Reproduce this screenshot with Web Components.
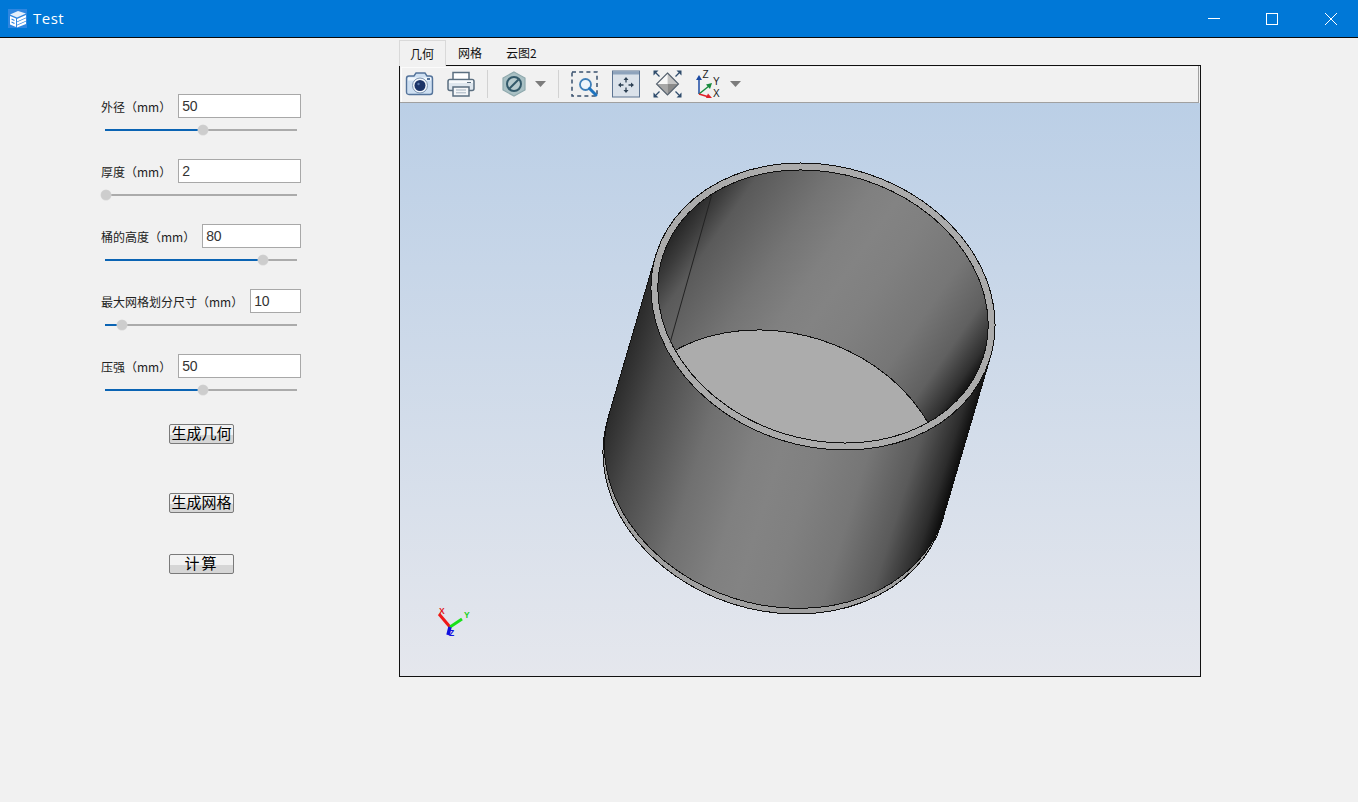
<!DOCTYPE html>
<html lang="zh">
<head>
<meta charset="utf-8">
<title>Test</title>
<style>
  html, body { margin: 0; height: 100%; background: #f1f1f1; overflow: hidden; }
  body { display: flex; flex-direction: column; }
</style>
</head>
<body>
<win-titlebar>Test</win-titlebar>
<app-main>
  <param-panel slot="side">
    <param-row label="外径（mm）" value="50" pos="98"></param-row>
    <param-row label="厚度（mm）" value="2" pos="1"></param-row>
    <param-row label="桶的高度（mm）" value="80" pos="158"></param-row>
    <param-row label="最大网格划分尺寸（mm）" value="10" pos="17"></param-row>
    <param-row label="压强（mm）" value="50" pos="98"></param-row>
    <app-button style="margin-top:22px">生成几何</app-button>
    <app-button style="margin-top:49px">生成网格</app-button>
    <app-button style="margin-top:41px" wide>计算</app-button>
  </param-panel>
  <view-tabs slot="view">
    <view-toolbar></view-toolbar>
    <model-view></model-view>
  </view-tabs>
</app-main>

<script>
class WinTitlebar extends HTMLElement {
  constructor() {
    super();
    this.attachShadow({ mode: "open" }).innerHTML = `
      <style>
        :host { display: flex; align-items: center; height: 37px; background: #0078d7; border-bottom: 1px solid #0a0a0a; color: #fff; flex: none; overflow: hidden; font: 15px "Open Sans", "Noto Sans", sans-serif; }
        .logo { margin-left: 8px; width: 19px; height: 19px; background: #2f86e0; display: block; }
        .name { margin-left: 6px; flex: 1; letter-spacing: .5px; padding-bottom: 1px; }
        .btns { display: flex; margin-right: -2px; }
        .btn { width: 58.5px; height: 37px; display: flex; align-items: center; justify-content: center; }
        .btn svg { display: block; width: 12px; height: 12px; }
      </style>
      <svg class="logo" viewBox="0 0 19 19">
        <path d="M2 5.500 L10 2 L18 4.500 L9 8.500 Z" fill="#e4effb"/>
        <path d="M2 7 L8 9.500 L8 18 L2 15.500 Z" fill="#fff"/>
        <path d="M3.500 10 L6.500 11.500 M3.500 13 L6.500 14.500" stroke="#2f86e0" stroke-width="1.200"/>
        <path d="M9 10 L18 6 V8.500 L9 12.500 Z M9 13.200 L18 9.200 V11.700 L9 15.700 Z M9 16.400 L18 12.400 V14.900 L9 18.500 Z" fill="#fff"/>
      </svg>
      <span class="name"><slot></slot></span>
      <div class="btns">
        <span class="btn"><svg viewBox="0 0 12 12"><path d="M0 5.500H12" stroke="#fff"/></svg></span>
        <span class="btn"><svg viewBox="0 0 12 12"><rect x=".5" y=".5" width="11" height="11" fill="none" stroke="#fff"/></svg></span>
        <span class="btn"><svg viewBox="0 0 12 12"><path d="M0 0L12 12M12 0L0 12" stroke="#fff"/></svg></span>
      </div>`;
  }
}

class AppMain extends HTMLElement {
  constructor() {
    super();
    this.attachShadow({ mode: "open" }).innerHTML = `
      <style>
        :host { display: flex; flex: 1; min-height: 0; }
        .side { display: block; width: 399px; flex: none; }
      </style>
      <div class="side"><slot name="side"></slot></div>
      <slot name="view"></slot>`;
  }
}

class ParamPanel extends HTMLElement {
  constructor() {
    super();
    this.attachShadow({ mode: "open" }).innerHTML = `
      <style>
        :host { display: flex; flex-direction: column; align-items: flex-start; padding: 56px 0 0 101px; width: 200px; }
      </style>
      <slot></slot>`;
  }
}

class ParamRow extends HTMLElement {
  constructor() {
    super();
    const root = this.attachShadow({ mode: "open" });
    root.innerHTML = `
      <style>
        :host { display: block; width: 200px; height: 65px; flex: none; }
        :host(:last-of-type) { height: 48px; }
        .top { display: flex; align-items: center; height: 24px; gap: 7px; }
        label { font: 12px "Noto Sans CJK SC", "Microsoft YaHei", sans-serif; color: #222; white-space: nowrap; }
        .val { flex: 1; box-sizing: border-box; height: 24px; background: #fff; border: 1px solid #a8a8a8; padding-left: 3px; font: 14px/23px "Liberation Sans", sans-serif; letter-spacing: -.3px; color: #333; }
        .track { position: relative; margin: 11px 0 0 4px; width: 192px; height: 2px; background: #ababab; }
        .fill { position: absolute; left: 0; top: 0; height: 2px; background: #0a64b4; }
        .thumb { position: absolute; top: -4px; width: 10px; height: 10px; border-radius: 50%; background: #cdcdcd; box-shadow: 0 0 0 .5px #d8d8d8; }
      </style>
      <div class="top"><label></label><div class="val"></div></div>
      <div class="track"><div class="fill"></div><div class="thumb"></div></div>`;
    const pos = Number(this.getAttribute("pos"));
    root.querySelector("label").textContent = this.getAttribute("label");
    root.querySelector(".val").textContent = this.getAttribute("value");
    root.querySelector(".fill").style.width = pos + "px";
    root.querySelector(".thumb").style.left = pos - 5 + "px";
  }
}

class AppButton extends HTMLElement {
  constructor() {
    super();
    this.attachShadow({ mode: "open" }).innerHTML = `
      <style>
        :host { display: flex; align-items: center; justify-content: center; box-sizing: border-box; width: 65px; height: 20px; margin-left: 68px; flex: none; padding-bottom: 2px; border: 1px solid #7a7a7a; border-radius: 2px; background: linear-gradient(#f2f2f2 0 55%, #d6d6d6 55%); font: 15px/16px "Noto Sans CJK SC", sans-serif; color: #000; white-space: nowrap; }
        :host([wide]) { letter-spacing: 2px; }
      </style>
      <slot></slot>`;
  }
}

class ViewTabs extends HTMLElement {
  constructor() {
    super();
    this.attachShadow({ mode: "open" }).innerHTML = `
      <style>
        :host { display: block; width: 802px; flex: none; padding-top: 2px; }
        .tabs { display: flex; height: 25px; font: 12px "Noto Sans CJK SC", sans-serif; color: #111; white-space: nowrap; }
        .tab { display: flex; align-items: center; padding: 0 12px 0 11px; }
        .tab.on { box-sizing: border-box; width: 47px; height: 26px; padding: 0 0 0 10px; border: 1px solid #d9d9d9; border-bottom: none; background: #f1f1f1; position: relative; z-index: 1; }
        .tab + .tab { margin-left: 1px; }
        .frame { box-sizing: border-box; height: 612px; border: 1px solid #111; background: #f1f1f1; display: flex; flex-direction: column; }
      </style>
      <div class="tabs">
        <div class="tab on">几何</div>
        <div class="tab">网格</div>
        <div class="tab">云图2</div>
      </div>
      <div class="frame"><slot></slot></div>`;
  }
}

class ViewToolbar extends HTMLElement {
  constructor() {
    super();
    this.attachShadow({ mode: "open" }).innerHTML = `
      <style>
        :host { display: flex; align-items: center; box-sizing: border-box; height: 37px; flex: none; padding-left: 5px; border-bottom: 1px solid #a0a0a0; border-right: 1px solid #a0a0a0; margin-right: 1px; box-shadow: inset 1px 1px 0 #f1f1f1, inset 2px 2px 0 #fbfbfb; }
        svg { display: block; height: 28px; flex: none; }
        .sep { width: 1px; height: 28px; background: #d2d2d2; flex: none; }
        text { font: 10px "Liberation Sans", sans-serif; fill: #222; }
      </style>
      <svg width="29" viewBox="0 0 29 28">
        <path d="M1.500 8.500 Q1.500 6 4 6 H9 L11 3 H20 L22 6 H25 Q27.500 6 27.500 8.500 V22 Q27.500 24.500 25 24.500 H4 Q1.500 24.500 1.500 22 Z" fill="#cfe0f2" stroke="#54739a" stroke-width="1.400"/>
        <rect x="3" y="7.500" width="23" height="3" fill="#f2f7fc"/>
        <circle cx="15" cy="15.500" r="7.500" fill="#f3f7fb" stroke="#7b93b0"/>
        <circle cx="15" cy="15.500" r="5.500" fill="#1b3367"/>
        <circle cx="13.500" cy="14" r="1.200" fill="#5a77a8"/>
        <rect x="22" y="8" width="3" height="2" fill="#54739a"/>
      </svg>
      <svg width="28" viewBox="0 0 28 28" style="margin-left:13px">
        <path d="M6 10 V2.500 H22 V10" fill="#fff" stroke="#5b6f80" stroke-width="1.500"/>
        <rect x="1" y="9.500" width="26" height="11" rx="2" fill="#dfe7ee" stroke="#5b6f80" stroke-width="1.500"/>
        <rect x="2" y="10.500" width="24" height="2.500" fill="#f6f9fb"/>
        <path d="M20 12.500h4" stroke="#5b6f80"/>
        <path d="M6 17 H22 V26 H6 Z" fill="#f4f6f8" stroke="#5b6f80" stroke-width="1.500"/>
        <path d="M9 20H19M9 22.800H19" stroke="#a4b2be"/>
      </svg>
      <span class="sep" style="margin-left:12px"></span>
      <svg width="26" viewBox="0 0 26 28" style="margin-left:13px">
        <path d="M13 2 L24 8 V20 L13 26 L2 20 V8 Z" fill="#a9c0c4" stroke="#8fa9ad" stroke-width="1.200"/>
        <circle cx="13" cy="14" r="7" fill="#b7cace" stroke="#33596a" stroke-width="2"/>
        <path d="M8.500 18.500 L17.500 9.500" stroke="#33596a" stroke-width="2"/>
      </svg>
      <svg width="11" viewBox="0 0 11 6" style="height:6px;margin-left:8px"><path d="M0 0H11L5.500 6Z" fill="#7c7c7c"/></svg>
      <span class="sep" style="margin-left:12px"></span>
      <svg width="28" viewBox="0 0 28 28" style="margin-left:12px">
        <rect x="1" y="2" width="25" height="24" fill="none" stroke="#39506e" stroke-width="1.500" stroke-dasharray="4 3.200"/>
        <circle cx="14.500" cy="14.500" r="5.500" fill="#eef5fb" stroke="#3f7fb8" stroke-width="1.800"/>
        <path d="M18.500 18.500 L25 25" stroke="#1f74bf" stroke-width="3" stroke-linecap="round"/>
      </svg>
      <svg width="28" viewBox="0 0 28 28" style="margin-left:13px">
        <rect x=".5" y="1" width="27" height="26" fill="#dbe2ea" stroke="#5d7492"/>
        <rect x="1" y="1.500" width="26" height="3" fill="#8ea3bc"/>
        <path d="M14 9 V12.500 M14 17.500 V21 M7.500 15 H11.500 M16.500 15 H20.500" stroke="#2e4154" stroke-width="1.300"/>
        <path d="M14 7 L16.500 10 H11.500 Z M14 23 L16.500 20 H11.500 Z M6 15 L9 12.500 V17.500 Z M22 15 L19 12.500 V17.500 Z" fill="#2e4154"/>
      </svg>
      <svg width="29" viewBox="0 0 29 28" style="margin-left:13px">
        <path d="M14.500 3 L25.500 14 L14.500 25 L3.500 14 Z" fill="#d8d8d8"/>
        <path d="M14.500 3 L25.500 14 H14.500 Z" fill="#c4c4c4"/>
        <path d="M14.500 3 L3.500 14 H14.500 Z" fill="#f8f8f8"/>
        <path d="M3.500 14 H14.500 V25 Z" fill="#a8a8a8"/>
        <path d="M25.500 14 H14.500 V25 Z" fill="#8a8a8a"/>
        <path d="M14.500 3 L25.500 14 L14.500 25 L3.500 14 Z" fill="none" stroke="#55616e" stroke-width="1.100"/>
        <path d="M.500 .500 H5.500 L.500 5.500 Z M28.500 .500 V5.500 L23.500 .500 Z M.500 27.500 V22.500 L5.500 27.500 Z M28.500 27.500 H23.500 L28.500 22.500 Z" fill="#2f4c6c"/>
        <path d="M3 3 L6.500 6.500 M26 3 L22.500 6.500 M3 25 L6.500 21.500 M26 25 L22.500 21.500" stroke="#2f4c6c" stroke-width="1.300"/>
      </svg>
      <svg width="27" viewBox="0 0 27 28" style="margin-left:14px">
        <path d="M3 24 V9" stroke="#1b4aa3" stroke-width="1.500"/>
        <path d="M3 5 L6 10 H0 Z" fill="#1b4aa3"/>
        <path d="M3 24 L13 16" stroke="#178a3c" stroke-width="1.500"/>
        <path d="M16 13 L14 19 L10 14.500 Z" fill="#178a3c"/>
        <path d="M3 24 L13 27" stroke="#e0222a" stroke-width="1.500"/>
        <path d="M16 28 L10 28 L12 23.500 Z" fill="#e0222a"/>
        <text x="6.500" y="8">Z</text>
        <text x="17" y="15">Y</text>
        <text x="17" y="27">X</text>
      </svg>
      <svg width="11" viewBox="0 0 11 6" style="height:6px;margin-left:7px"><path d="M0 0H11L5.500 6Z" fill="#7c7c7c"/></svg>`;
  }
}

class ModelView extends HTMLElement {
  constructor() {
    super();
    this.attachShadow({ mode: "open" }).innerHTML = `
      <style>
        :host { display: block; flex: 1; min-height: 0; background: linear-gradient(#bbcfe6, #e5e7ed); }
        svg { display: block; width: 100%; height: 100%; }
        .edge { fill: none; stroke: #111; stroke-width: 1; }
        text { font: bold 8.500px "Liberation Sans", sans-serif; }
      </style>
      <svg viewBox="400 103 800 573" preserveAspectRatio="none">
        <defs>
          <linearGradient id="outer" gradientUnits="userSpaceOnUse" x1="608" y1="418" x2="942" y2="523">
            <stop offset="0" stop-color="#2c2c2c"/>
            <stop offset=".1" stop-color="#4a4a4a"/>
            <stop offset=".28" stop-color="#707070"/>
            <stop offset=".42" stop-color="#808080"/>
            <stop offset=".5" stop-color="#838383"/>
            <stop offset=".6" stop-color="#808080"/>
            <stop offset=".74" stop-color="#767676"/>
            <stop offset=".87" stop-color="#5a5a5a"/>
            <stop offset=".96" stop-color="#2c2c2c"/>
            <stop offset="1" stop-color="#0a0a0a"/>
          </linearGradient>
          <linearGradient id="wall" gradientUnits="userSpaceOnUse" x1="662" y1="256" x2="984" y2="357">
            <stop offset="0" stop-color="#222"/>
            <stop offset=".06" stop-color="#3c3c3c"/>
            <stop offset=".12" stop-color="#5a5a5a"/>
            <stop offset=".3" stop-color="#747474"/>
            <stop offset=".42" stop-color="#808080"/>
            <stop offset=".5" stop-color="#838383"/>
            <stop offset=".6" stop-color="#808080"/>
            <stop offset=".76" stop-color="#767676"/>
            <stop offset=".88" stop-color="#606060"/>
            <stop offset=".96" stop-color="#303030"/>
            <stop offset="1" stop-color="#080808"/>
          </linearGradient>
          <clipPath id="inner">
            <ellipse cx="823" cy="306.500" rx="168" ry="133" transform="rotate(17.500 823 306.500)"/>
          </clipPath>
        </defs>
        <g shape-rendering="crispEdges">
          <ellipse class="edge" cx="775" cy="470.500" rx="174.900" ry="140" transform="rotate(17.500 775 470.500)" style="fill:#a0a0a0"/>
          <path class="edge" style="fill:url(#outer)" d="M656.200 253.900 L608.900 415 A174.900 140 17.500 0 0 942.500 520 L989.800 359 Z"/>
          <ellipse class="edge" cx="823" cy="306.500" rx="174.900" ry="140" transform="rotate(17.500 823 306.500)" style="fill:#ababab"/>
          <ellipse class="edge" cx="823" cy="306.500" rx="168" ry="133" transform="rotate(17.500 823 306.500)" style="fill:url(#wall)"/>
          <g clip-path="url(#inner)">
            <ellipse class="edge" cx="780" cy="466.500" rx="168" ry="133" transform="rotate(17.500 780 466.500)" style="fill:#acacac"/>
          </g>
          <ellipse class="edge" cx="823" cy="306.500" rx="168" ry="133" transform="rotate(17.500 823 306.500)"/>
        </g>
        <path d="M711.700 195 L670 343" stroke="#222" stroke-width="1" fill="none"/>
        <path d="M450 627 L439 614" stroke="#f01818" stroke-width="3"/>
        <path d="M450 627 L462 619" stroke="#18e018" stroke-width="3"/>
        <path d="M450 627 L448 635" stroke="#1010e0" stroke-width="3.500"/>
        <text x="439" y="614" fill="#e01818">X</text>
        <text x="464" y="618" fill="#18d018">Y</text>
        <text x="449" y="636" fill="#1010e0">Z</text>
      </svg>`;
  }
}

customElements.define("win-titlebar", WinTitlebar);
customElements.define("app-main", AppMain);
customElements.define("param-panel", ParamPanel);
customElements.define("param-row", ParamRow);
customElements.define("app-button", AppButton);
customElements.define("view-tabs", ViewTabs);
customElements.define("view-toolbar", ViewToolbar);
customElements.define("model-view", ModelView);
</script>
</body>
</html>
